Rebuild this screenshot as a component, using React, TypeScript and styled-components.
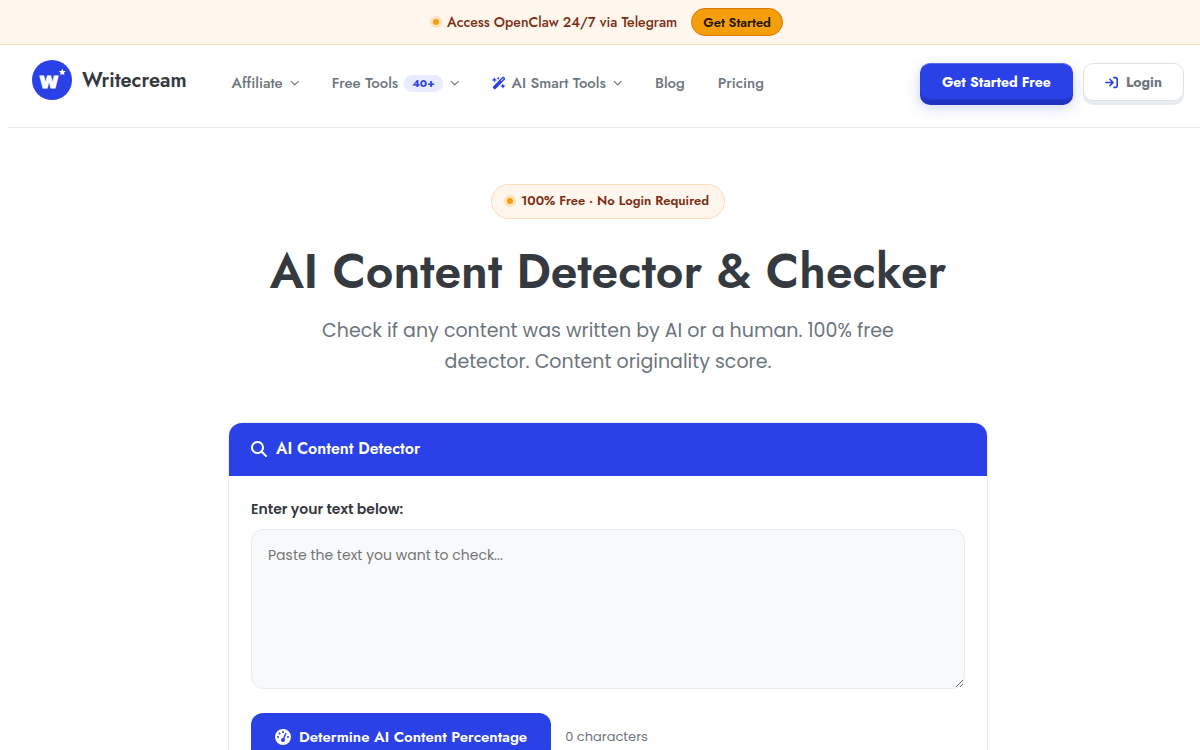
import React, { useState } from "react";
import styled, { createGlobalStyle } from "styled-components";
import {
  FaArrowRightToBracket,
  FaGaugeHigh,
  FaMagnifyingGlass,
  FaWandMagicSparkles,
} from "react-icons/fa6";

const heading = `Jost, Lato, "Liberation Sans", sans-serif`;
const copy = `Poppins, Inter, "Liberation Sans", sans-serif`;
const blue = "#2a41e8";

const GlobalStyle = createGlobalStyle`
  *, *::before, *::after { box-sizing: border-box; }
  body {
    margin: 0;
    background: #fff;
    color: #343a40;
    font-family: ${copy};
    overflow-x: hidden;
  }
  button { font-family: ${heading}; cursor: pointer; }
`;

const Banner = styled.div`
  display: flex;
  align-items: center;
  justify-content: center;
  gap: 14px;
  padding: 8px 0 8px 16px;
  background: #fff6ed;
  border-bottom: 1px solid #fddcbb;
`;

const Notice = styled.span<{ $size: number; $weight: number }>`
  display: flex;
  align-items: center;
  gap: 8px;
  font-family: ${heading};
  font-size: ${(p) => p.$size}px;
  font-weight: ${(p) => p.$weight};
  line-height: 19px;
  color: #7c2d12;
`;

const Dot = styled.span`
  width: 6px;
  height: 6px;
  border-radius: 50%;
  background: #f59e0b;
  box-shadow: 0 0 0 3px #fde3bb;
`;

const BannerButton = styled.button`
  height: 28px;
  padding: 0 11px;
  border: 1px solid #d97706;
  border-radius: 14px;
  background: #f59e0b;
  color: #1f1300;
  font-size: 13px;
  font-weight: 600;
`;

const Header = styled.header`
  display: flex;
  align-items: center;
  height: 83px;
  margin-left: 8px;
  padding: 0 16px 8px 24px;
  border-bottom: 1px solid #e9ecef;
`;

const Brand = styled.a`
  display: flex;
  align-items: center;
  gap: 10px;
  margin-right: 45px;
  padding-bottom: 4px;
  color: #343a40;
  font-family: ${heading};
  font-size: 20px;
  font-weight: 600;
  text-decoration: none;
`;

const Nav = styled.nav`
  display: flex;
  align-items: center;
  gap: 33px;
  flex: 1;
  padding-top: 2px;
`;

const NavLink = styled.a`
  display: flex;
  align-items: center;
  gap: 6px;
  color: #6c757d;
  font-family: ${heading};
  font-size: 15px;
  font-weight: 500;
  line-height: 24px;
  text-decoration: none;
  white-space: nowrap;
`;

const Count = styled.span`
  padding: 0 8px;
  border-radius: 9px;
  background: #e8eafd;
  color: ${blue};
  font-size: 11px;
  font-weight: 700;
  line-height: 17px;
`;

const Actions = styled.div`
  display: flex;
  gap: 10px;
`;

const ActionButton = styled.button<{ $primary?: boolean }>`
  display: flex;
  align-items: center;
  gap: 8px;
  height: 38px;
  padding: 0 21px;
  border: 1px solid ${(p) => (p.$primary ? blue : "#dee2e6")};
  border-radius: 10px;
  background: ${(p) => (p.$primary ? blue : "#fff")};
  color: ${(p) => (p.$primary ? "#fff" : "#6c757d")};
  box-shadow: ${(p) =>
    p.$primary
      ? "inset 0 -1px 0 #2438c8, 0 4px 0 #2033c4, 0 6px 14px rgba(42, 65, 232, 0.25)"
      : "0 4px 0 #e9ecef"};
  border-top-color: ${(p) => (p.$primary ? "#5a6dee" : "#dee2e6")};
  border-bottom-color: ${(p) => (p.$primary ? "#2438c8" : "#dee2e6")};
  font-size: 14px;
  font-weight: 700;
  white-space: nowrap;
  svg { color: ${blue}; }
`;

const Main = styled.main`
  display: flex;
  flex-direction: column;
  align-items: center;
  padding: 56px 0 48px 16px;
`;

const Pill = styled.div`
  padding: 6px 15px 8px;
  border: 1px solid #fddcbb;
  border-radius: 18px;
  background: #fff6ed;
`;

const Title = styled.h1`
  margin: 23px 0 0;
  font-family: ${heading};
  font-size: 48px;
  font-weight: 600;
  line-height: 60px;
  text-align: center;
`;

const Lead = styled.p`
  max-width: 600px;
  margin: 13px 0 45px;
  color: #6c757d;
  font-size: 19px;
  line-height: 31px;
  text-align: center;
`;

const Card = styled.section`
  width: 100%;
  max-width: 760px;
  overflow: hidden;
  border: 1px solid #e9ecef;
  border-radius: 14px;
`;

const CardTitle = styled.h2`
  display: flex;
  align-items: center;
  gap: 9px;
  margin: 0;
  padding: 14px 22px 15px;
  background: ${blue};
  color: #fff;
  font-family: ${heading};
  font-size: 16px;
  font-weight: 600;
  line-height: 24px;
`;

const Form = styled.form`
  display: flex;
  flex-direction: column;
  padding: 22px;
`;

const Label = styled.label`
  margin-bottom: 9px;
  font-size: 14px;
  font-weight: 600;
  line-height: 22px;
`;

const TextArea = styled.textarea`
  height: 160px;
  padding: 13px 16px;
  border: 1px solid #e9ecef;
  border-radius: 12px;
  background: #f8f9fb;
  color: #343a40;
  font-family: ${copy};
  font-size: 14px;
  line-height: 24px;
  resize: vertical;
  &::placeholder { color: #757575; }
`;

const SubmitRow = styled.div`
  display: flex;
  align-items: center;
  gap: 14px;
  margin-top: 24px;
  color: #6c757d;
  font-size: 13px;
`;

const Submit = styled.button`
  display: flex;
  align-items: center;
  gap: 8px;
  height: 48px;
  padding: 0 24px;
  border: 0;
  border-radius: 12px;
  background: ${blue};
  color: #fff;
  font-size: 15px;
  font-weight: 600;
`;

const LogoLetter = styled.text`
  fill: #fff;
  stroke: #fff;
  stroke-width: 1px;
  font-family: "DejaVu Sans", sans-serif;
  font-size: 21px;
  font-weight: 700;
  text-anchor: middle;
`;

const Logo = () => (
  <svg width="40" height="40" viewBox="0 0 40 40" aria-hidden="true">
    <circle cx="20" cy="20" r="20" fill={blue} />
    <LogoLetter x="17" y="28">w</LogoLetter>
    <path d="m30.3 8.6 1 2.3 2.5.2-1.9 1.6.6 2.5-2.2-1.3-2.1 1.3.5-2.5-1.9-1.6 2.5-.2z" fill="#fff" />
  </svg>
);

const Chevron = () => (
  <svg width="10" height="10" viewBox="0 0 10 10" aria-hidden="true">
    <path
      d="M2.2 3.3 5.7 6.8 9.2 3.3"
      fill="none"
      stroke="currentColor"
      strokeWidth="1.2"
      strokeLinecap="round"
      strokeLinejoin="round"
    />
  </svg>
);

export default function App() {
  const [text, setText] = useState("");
  return (
    <>
      <GlobalStyle />
      <Banner>
        <Notice $size={14} $weight={500}>
          <Dot />
          Access OpenClaw 24/7 via Telegram
        </Notice>
        <BannerButton type="button">Get Started</BannerButton>
      </Banner>
      <Header>
        <Brand href="#">
          <Logo />
          Writecream
        </Brand>
        <Nav>
          <NavLink href="#affiliate">Affiliate <Chevron /></NavLink>
          <NavLink href="#tools">Free Tools <Count>40+</Count> <Chevron /></NavLink>
          <NavLink href="#smart">
            <FaWandMagicSparkles size={14} color={blue} /> AI Smart Tools <Chevron />
          </NavLink>
          <NavLink href="#blog">Blog</NavLink>
          <NavLink href="#pricing">Pricing</NavLink>
        </Nav>
        <Actions>
          <ActionButton type="button" $primary>Get Started Free</ActionButton>
          <ActionButton type="button"><FaArrowRightToBracket size={13} /> Login</ActionButton>
        </Actions>
      </Header>
      <Main>
        <Pill>
          <Notice $size={13} $weight={600}>
            <Dot />
            100% Free · No Login Required
          </Notice>
        </Pill>
        <Title>AI Content Detector &amp; Checker</Title>
        <Lead>Check if any content was written by AI or a human. 100% free detector. Content originality score.</Lead>
        <Card>
          <CardTitle><FaMagnifyingGlass size={16} /> AI Content Detector</CardTitle>
          <Form onSubmit={(e) => e.preventDefault()}>
            <Label htmlFor="content">Enter your text below:</Label>
            <TextArea
              id="content"
              placeholder="Paste the text you want to check..."
              value={text}
              onChange={(e) => setText(e.target.value)}
            />
            <SubmitRow>
              <Submit type="submit"><FaGaugeHigh size={16} /> Determine AI Content Percentage</Submit>
              <span>{text.length} characters</span>
            </SubmitRow>
          </Form>
        </Card>
      </Main>
    </>
  );
}
